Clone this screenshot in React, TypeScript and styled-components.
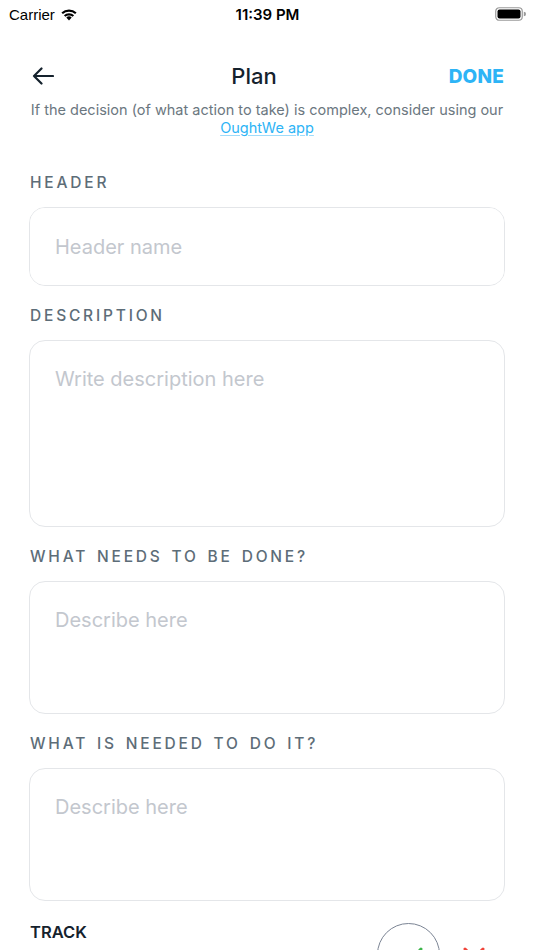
import styled, { createGlobalStyle } from "styled-components";

const Global = createGlobalStyle`
  html, body {
    margin: 0;
    padding: 0;
    background: #ffffff;
  }
  body {
    font-family: "Inter", "Noto Sans", sans-serif;
    -webkit-font-smoothing: antialiased;
  }
  * { box-sizing: border-box; }
`;

const Screen = styled.div`
  width: 534px;
  height: 950px;
  overflow: hidden;
  background: #fff;
  display: flex;
  flex-direction: column;
  & > * {
    flex-shrink: 0;
  }
`;

const StatusBar = styled.div`
  height: 28px;
  padding: 0 8px 0 9px;
  display: flex;
  align-items: center;
  justify-content: space-between;
  font-family: "Liberation Sans", "Inter", sans-serif;
  font-size: 15px;
  color: #000;
`;

const StatusSide = styled.div<{ end?: boolean }>`
  width: 120px;
  display: flex;
  align-items: center;
  gap: 5px;
  justify-content: ${(p) => (p.end ? "flex-end" : "flex-start")};
`;

const Time = styled.div`
  font-weight: 600;
  font-family: "Inter", sans-serif;
  font-size: 15px;
`;

const NavBar = styled.div`
  margin-top: 26px;
  height: 44px;
  padding: 0 30px 0 32px;
  display: grid;
  grid-template-columns: 60px 1fr 60px;
  align-items: center;
`;

const BackButton = styled.button`
  border: none;
  background: none;
  padding: 0;
  display: flex;
  align-items: center;
  cursor: pointer;
`;

const Title = styled.h1`
  margin: 0;
  text-align: center;
  font-size: 22px;
  font-weight: 500;
  color: #15222d;
  padding-right: 28px;
`;

const DoneButton = styled.button`
  border: none;
  background: none;
  padding: 0;
  font-family: inherit;
  font-size: 19px;
  font-weight: 800;
  color: #2db4f6;
  text-align: right;
  letter-spacing: 0.2px;
  cursor: pointer;
  white-space: nowrap;
`;

const Hint = styled.p`
  margin: 3px 0 0;
  padding: 0 24px;
  text-align: center;
  font-size: 14.5px;
  line-height: 18px;
  color: #6b7780;
`;

const HintLink = styled.a`
  color: #2db4f6;
  text-decoration: underline;
  text-decoration-color: #9fdcfb;
  text-underline-offset: 2px;
`;

const Form = styled.div`
  padding: 36px 29px 0;
  display: flex;
  flex-direction: column;
  gap: 20px;
`;

const Field = styled.div`
  display: flex;
  flex-direction: column;
  gap: 14px;
`;

const Label = styled.label`
  padding-left: 1px;
  font-size: 15.5px;
  line-height: 20px;
  font-weight: 500;
  letter-spacing: 2.8px;
  word-spacing: 2px;
  color: #5d6d78;
  text-transform: uppercase;
`;

const Box = styled.textarea<{ h: number }>`
  width: 100%;
  height: ${(p) => p.h}px;
  border: 1px solid #e4e6e9;
  border-radius: 16px;
  padding: ${(p) => (p.h < 100 ? "26px" : "25px")} 25px;
  font-family: inherit;
  font-size: 20px;
  line-height: 26px;
  color: #15222d;
  resize: none;
  outline: none;
  background: #fff;
  &::placeholder {
    color: #c3c7ce;
  }
`;

const TrackRow = styled.div`
  margin-top: 20px;
  padding: 0 29px 0 30px;
  display: flex;
  align-items: flex-start;
  justify-content: space-between;
`;

const TrackLabel = styled.div`
  font-size: 16.5px;
  font-weight: 600;
  color: #15222d;
  line-height: 22px;
`;

const TrackActions = styled.div`
  display: flex;
  align-items: flex-start;
  gap: 22px;
  margin-right: 19px;
  margin-top: 2px;
`;

const CircleButton = styled.div`
  width: 63px;
  height: 63px;
  border-radius: 50%;
  border: 1.5px solid #7b8494;
  display: flex;
  align-items: flex-start;
  justify-content: flex-start;
  padding-left: 23px;
  padding-top: 23px;
`;

const CrossWrap = styled.div`
  margin-top: 23px;
`;

const fields = [
  { label: "Header", placeholder: "Header name", h: 79 },
  { label: "Description", placeholder: "Write description here", h: 187 },
  { label: "What needs to be done?", placeholder: "Describe here", h: 133 },
  { label: "What is needed to do it?", placeholder: "Describe here", h: 133 },
];

export default function App() {
  return (
    <Screen>
      <Global />
      <StatusBar>
        <StatusSide>
          <span>Carrier</span>
          <svg width="18" height="13" viewBox="0 0 18 13">
            <path d="M9 12.5 L6.3 9.6 A4 4 0 0 1 11.7 9.6 Z" fill="#000" />
            <path d="M3.9 7.2 A7.4 7.4 0 0 1 14.1 7.2 L12.6 8.8 A5.3 5.3 0 0 0 5.4 8.8 Z" fill="#000" />
            <path d="M1.4 4.6 A11 11 0 0 1 16.6 4.6 L15.1 6.1 A8.8 8.8 0 0 0 2.9 6.1 Z" fill="#000" />
          </svg>
        </StatusSide>
        <Time>11:39 PM</Time>
        <StatusSide end>
          <svg width="31" height="14" viewBox="0 0 31 14">
            <rect x="0.75" y="0.75" width="26.5" height="12.5" rx="3.5" fill="none" stroke="#9a9a9a" strokeWidth="1.2" />
            <rect x="2.5" y="2.5" width="23" height="9" rx="2" fill="#000" />
            <path d="M28.8 4.8 a1.6 1.6 0 0 1 0 4.4 z" fill="#9a9a9a" />
          </svg>
        </StatusSide>
      </StatusBar>

      <NavBar>
        <BackButton aria-label="Back">
          <svg width="22" height="18" viewBox="0 0 22 18">
            <path d="M21 9 H2 M9.5 1.5 L2 9 L9.5 16.5" fill="none" stroke="#15222d" strokeWidth="2.2" strokeLinecap="round" strokeLinejoin="round" />
          </svg>
        </BackButton>
        <Title>Plan</Title>
        <DoneButton>DONE</DoneButton>
      </NavBar>

      <Hint>
        If the decision (of what action to take) is complex, consider using our{" "}
        <HintLink href="#">OughtWe app</HintLink>
      </Hint>

      <Form>
        {fields.map((f) => (
          <Field key={f.label}>
            <Label>{f.label}</Label>
            <Box h={f.h} placeholder={f.placeholder} />
          </Field>
        ))}
      </Form>

      <TrackRow>
        <TrackLabel>TRACK</TrackLabel>
        <TrackActions>
          <CircleButton>
            <svg width="22" height="18" viewBox="0 0 22 18">
              <path d="M2 9 L8 15 L20 2" fill="none" stroke="#3cb54a" strokeWidth="3" strokeLinecap="round" strokeLinejoin="round" />
            </svg>
          </CircleButton>
          <CrossWrap>
            <svg width="24" height="24" viewBox="0 0 24 24">
              <path d="M3 3 L21 21 M21 3 L3 21" fill="none" stroke="#f0443a" strokeWidth="3" strokeLinecap="round" />
            </svg>
          </CrossWrap>
        </TrackActions>
      </TrackRow>
    </Screen>
  );
}
